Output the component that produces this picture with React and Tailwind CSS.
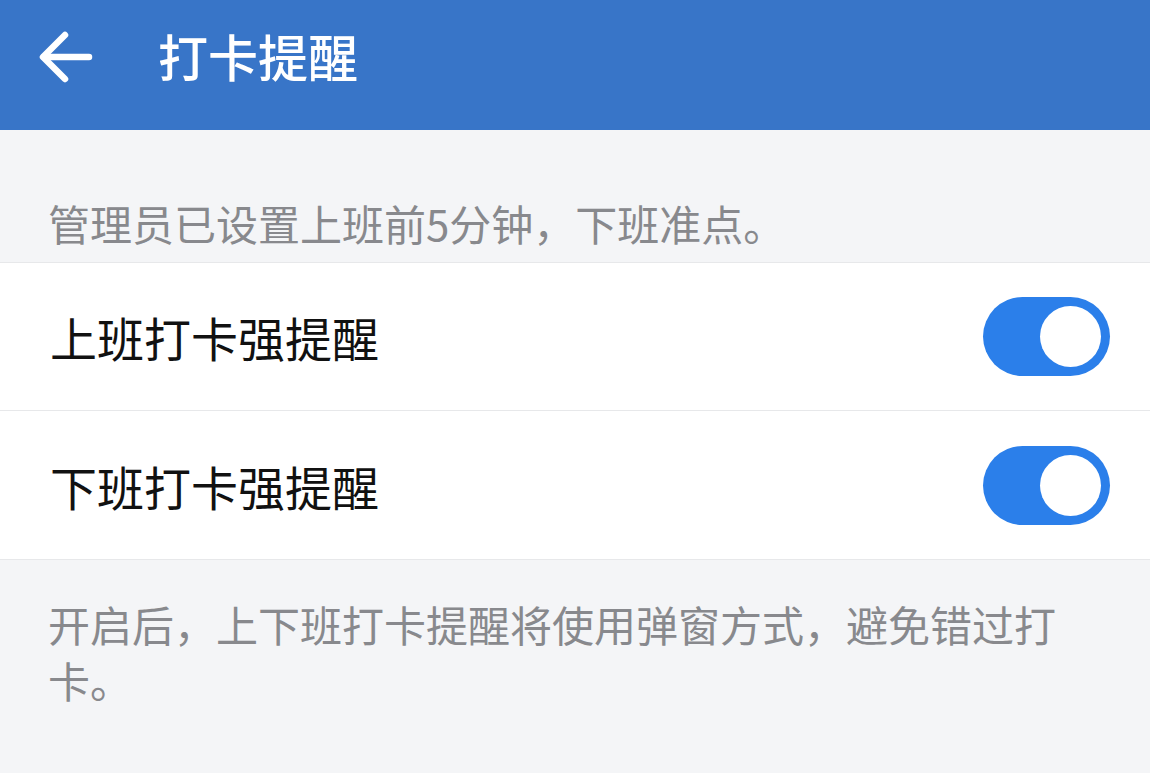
import React, { useState } from 'react'

function Toggle({ on, onChange }) {
  return (
    <button
      onClick={onChange}
      className={`w-[127px] h-[79px] rounded-full p-[9px] flex items-center ${on ? 'bg-[#2b7fea] justify-end' : 'bg-[#d9d9d9] justify-start'}`}
    >
      <span className="block w-[61px] h-[61px] rounded-full bg-white" />
    </button>
  )
}

function App() {
  const [onDuty, setOnDuty] = useState(true)
  const [offDuty, setOffDuty] = useState(true)

  const rows = [
    { label: '上班打卡强提醒', on: onDuty, toggle: () => setOnDuty(v => !v) },
    { label: '下班打卡强提醒', on: offDuty, toggle: () => setOffDuty(v => !v) },
  ]

  return (
    <div
      className="w-[1150px] h-[773px] bg-[#f4f5f7] overflow-hidden"
      style={{ fontFamily: '"Noto Sans CJK SC", "Noto Sans", sans-serif' }}
    >
      <header className="h-[130px] pb-[16px] bg-[#3875c8] flex items-center">
        <button className="ml-[38px] w-[56px] h-[56px] flex items-center justify-center text-white">
          <svg width="56" height="56" viewBox="0 0 56 56" fill="none" stroke="currentColor" strokeWidth="6.5" strokeLinecap="round" strokeLinejoin="round">
            <path d="M51 28H6" />
            <path d="M27 6L5 28l22 22" />
          </svg>
        </button>
        <h1 className="ml-[64px] mb-[4px] text-white text-[50px] leading-none font-medium">打卡提醒</h1>
      </header>

      <p className="pt-[68px] pb-[14px] pl-[48px] text-[#88898d] text-[42px] leading-[50px]">
        管理员已设置上班前5分钟，下班准点。
      </p>

      <div className="bg-white border-y border-[#e7e8ea] divide-y divide-[#e7e8ea]">
        {rows.map(r => (
          <div key={r.label} className="h-[148px] flex items-center justify-between pl-[50px] pr-[40px]">
            <span className="text-[47px] text-[#111] leading-none">{r.label}</span>
            <Toggle on={r.on} onChange={r.toggle} />
          </div>
        ))}
      </div>

      <p className="pt-[36px] pl-[48px] pr-[70px] text-[#88898d] text-[42px] leading-[56px]">
        开启后，上下班打卡提醒将使用弹窗方式，避免错过打卡。
      </p>
    </div>
  )
}

export default App
